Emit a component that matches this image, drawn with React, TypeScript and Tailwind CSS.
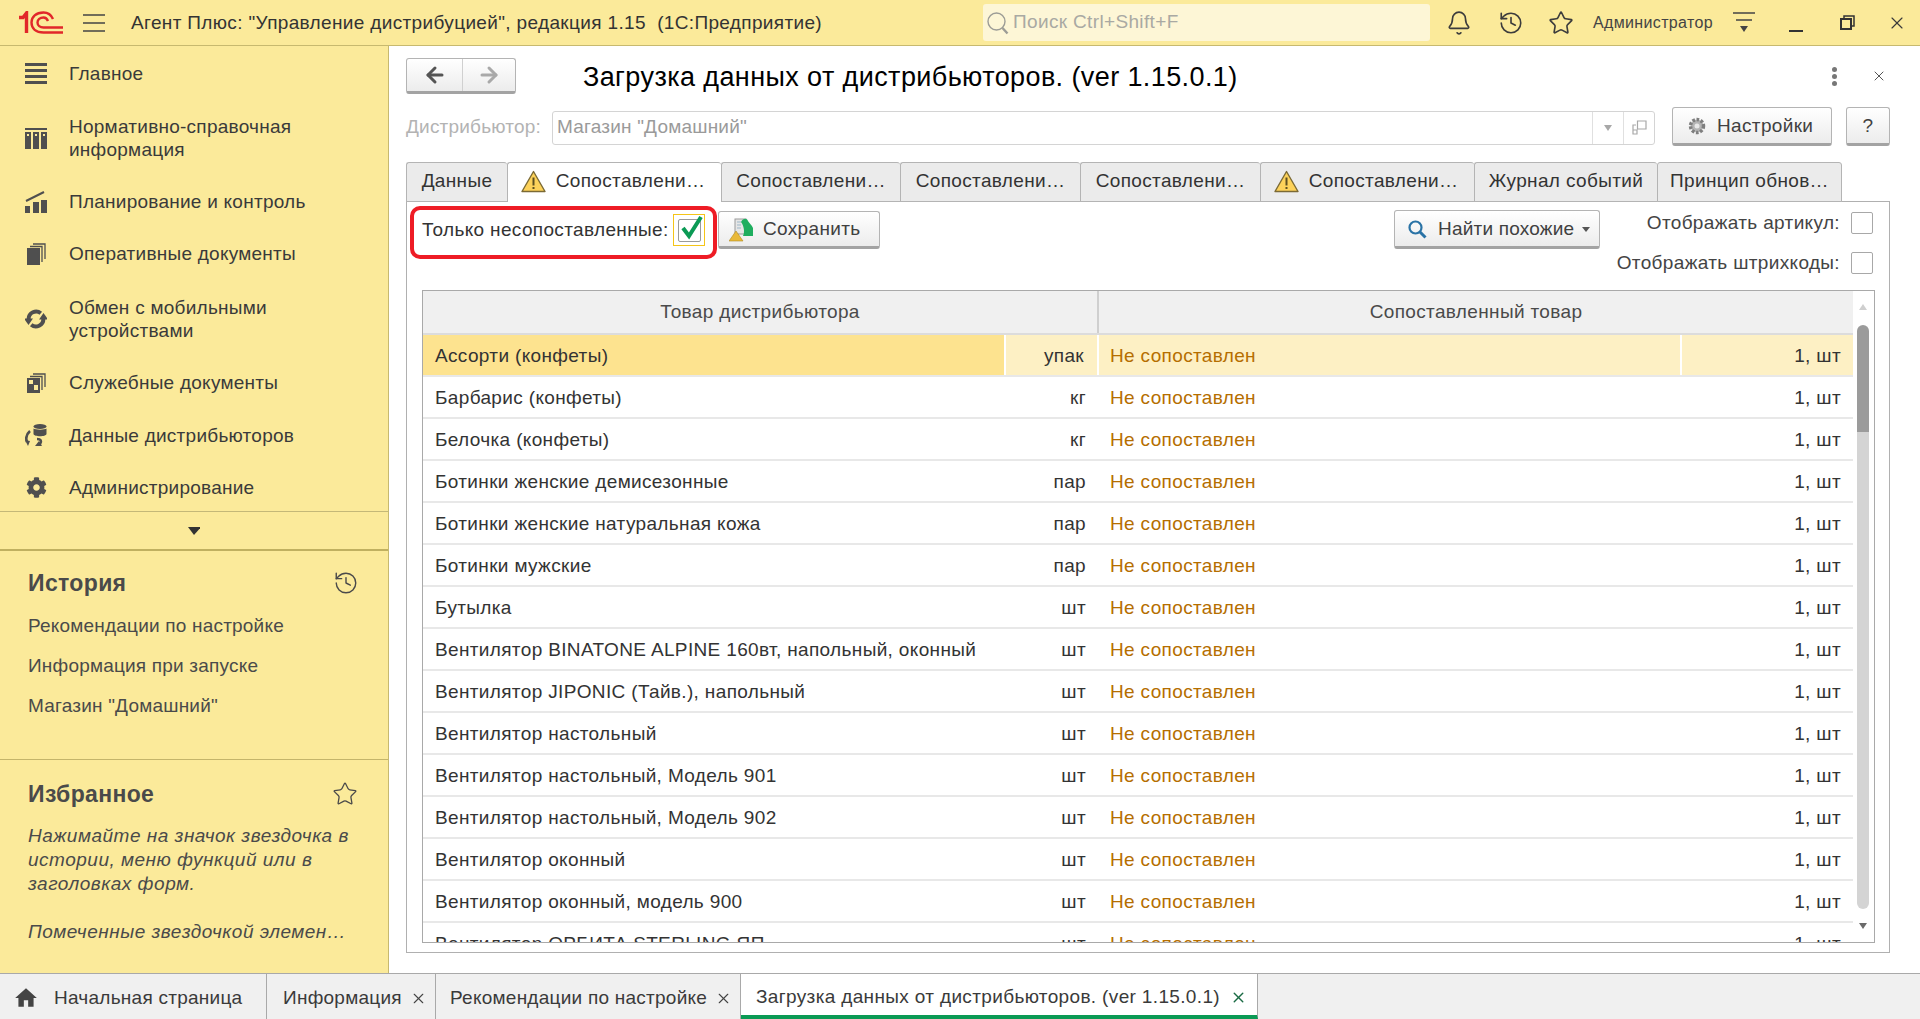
import React from "react";
import { Bell, History, Star, X, ArrowLeft, ArrowRight } from "lucide-react";
import { FaCog } from "react-icons/fa";
import { MdHome } from "react-icons/md";

const rows: [string, string][] = [
  ["Ассорти (конфеты)", "упак"],
  ["Барбарис (конфеты)", "кг"],
  ["Белочка (конфеты)", "кг"],
  ["Ботинки женские демисезонные", "пар"],
  ["Ботинки женские натуральная кожа", "пар"],
  ["Ботинки мужские", "пар"],
  ["Бутылка", "шт"],
  ["Вентилятор BINATONE ALPINE 160вт, напольный, оконный", "шт"],
  ["Вентилятор JIPONIC (Тайв.), напольный", "шт"],
  ["Вентилятор настольный", "шт"],
  ["Вентилятор настольный, Модель 901", "шт"],
  ["Вентилятор настольный, Модель 902", "шт"],
  ["Вентилятор оконный", "шт"],
  ["Вентилятор оконный, модель 900", "шт"],
  ["Вентилятор ОРБИТА STERLING ЯП", "шт"],
];

function Logo() {
  return (
    <svg width="44" height="23" viewBox="0 0 44 23" fill="none" stroke="#e1272a" strokeWidth="2.4">
      <path d="M0 6.5 L4 6.5 L7.5 2 L7.5 22" strokeWidth="3.4" />
      <path d="M34 8 C32 3.5 28.5 1.5 24.5 1.5 C17 1.5 12.5 6 12.5 11.5 C12.5 17.5 17 21.5 24.5 21.5 L44 21.5" />
      <path d="M29 10 C28 7.5 26.5 6.5 24.5 6.5 C21 6.5 18.5 8.8 18.5 11.5 C18.5 14.3 21 16.5 24.5 16.5 L44 16.5" />
    </svg>
  );
}

const navIcons: React.ReactNode[] = [
  <svg width="22" height="21" viewBox="0 0 22 21" fill="#4f4f4f"><rect y="0" width="22" height="3" /><rect y="6" width="22" height="3" /><rect y="12" width="22" height="3" /><rect y="18" width="22" height="3" /></svg>,
  <svg width="22" height="21" viewBox="0 0 22 21" fill="#4f4f4f"><rect y="0" width="22" height="2" /><rect y="4" width="6" height="17" /><rect x="8" y="4" width="6" height="17" /><rect x="16" y="4" width="6" height="17" /><rect x="2" y="6" width="2" height="2" fill="#fbea9a" /><rect x="10" y="6" width="2" height="2" fill="#fbea9a" /><rect x="18" y="6" width="2" height="2" fill="#fbea9a" /></svg>,
  <svg width="22" height="22" viewBox="0 0 22 22" fill="#4f4f4f"><rect x="0" y="15" width="5" height="7" /><rect x="8" y="11" width="6" height="11" /><rect x="16" y="9" width="6" height="13" /><path d="M1 10 L9 6 L19 1" stroke="#4f4f4f" strokeWidth="2" fill="none" /></svg>,
  <svg width="19" height="22" viewBox="0 0 19 22" fill="#4f4f4f"><rect x="0" y="5" width="13" height="17" /><path d="M3 3.5 H15 V19" fill="none" stroke="#4f4f4f" strokeWidth="1.3" /><path d="M6 1 H18 V16" fill="none" stroke="#4f4f4f" strokeWidth="1.3" /></svg>,
  <svg width="22" height="22" viewBox="0 0 22 22" fill="none" stroke="#4f4f4f" strokeWidth="4"><path d="M15.8 5.2 A7.5 7.5 0 0 0 3.6 11" /><path d="M6.2 16.8 A7.5 7.5 0 0 0 18.4 11" /><path d="M-1 10.5 L8 10.5 L3.5 17 Z" fill="#4f4f4f" stroke="none" /><path d="M14 11.5 L23 11.5 L18.5 5 Z" fill="#4f4f4f" stroke="none" /></svg>,
  <svg width="19" height="20" viewBox="0 0 19 20" fill="#4f4f4f"><rect x="0" y="5" width="13" height="15" /><rect x="2" y="7" width="4" height="4" fill="#fbea9a" /><rect x="7" y="12" width="4" height="5" fill="#fbea9a" /><path d="M3 3.5 H15 V17" fill="none" stroke="#4f4f4f" strokeWidth="1.3" /><path d="M6 1 H18 V14" fill="none" stroke="#4f4f4f" strokeWidth="1.3" /></svg>,
  <svg width="22" height="22" viewBox="0 0 22 22" fill="#4f4f4f"><ellipse cx="15" cy="2.5" rx="6.5" ry="2.5" /><path d="M8.5 4.5 C10 6 20 6 21.5 4.5 V10 C21 13 9 13 8.5 10 Z" /><path d="M5 7 C1.5 10 0.5 14 2 18" fill="none" stroke="#4f4f4f" strokeWidth="2.6" /><path d="M12 15 C16 15 17 17 15 20" fill="none" stroke="#4f4f4f" strokeWidth="2.6" /><path d="M0 16 L5 17 L3 22 Z" /><path d="M10 22 L17 22 L14 17 Z" /></svg>,
  <FaCog size={21} color="#4f4f4f" />,
];

const navItems: [string[], string][] = [
  [["Главное"], "h-[54px]"],
  [["Нормативно-справочная", "информация"], "h-[76px]"],
  [["Планирование и контроль"], "h-[51px]"],
  [["Оперативные документы"], "h-[53px]"],
  [["Обмен с мобильными", "устройствами"], "h-[77px]"],
  [["Служебные документы"], "h-[51px]"],
  [["Данные дистрибьюторов"], "h-[54px]"],
  [["Администрирование"], "h-[50px]"],
];

function Warn() {
  return (
    <svg width="25" height="23" viewBox="0 0 25 23">
      <path d="M12.5 1.5 L24 21.5 H1 Z" fill="#fdd25a" stroke="#7b6a35" strokeWidth="1.4" strokeLinejoin="round" />
      <rect x="11.5" y="7.5" width="2" height="8" fill="#5f5020" />
      <rect x="11.5" y="17" width="2" height="2" fill="#5f5020" />
    </svg>
  );
}

const tabs: [string, string, boolean, boolean][] = [
  ["Данные", "w-[101px]", false, false],
  ["Сопоставлени…", "w-[214px]", true, true],
  ["Сопоставлени…", "w-[179px]", false, false],
  ["Сопоставлени…", "w-[180px]", false, false],
  ["Сопоставлени…", "w-[180px]", false, false],
  ["Сопоставлени…", "w-[214px]", false, true],
  ["Журнал событий", "w-[183px]", false, false],
  ["Принцип обнов…", "w-[185px]", false, false],
];

const btn =
  "flex items-center rounded-[3px] border border-[#b4b4b4] border-b-[3px] border-b-[#a3a3a3] bg-linear-to-b from-white to-[#ececec] text-[#404040]";

export default function App() {
  return (
    <div className="flex h-[1019px] w-[1920px] flex-col overflow-hidden bg-white font-['Liberation_Sans',sans-serif] text-[19px] tracking-[0.35px] text-[#333]">
      {/* top bar */}
      <header className="flex h-[46px] shrink-0 items-center border-b border-[#c7b96f] bg-[#fbea9a]">
        <div className="ml-[19px]"><Logo /></div>
        <svg className="ml-[20px]" width="22" height="18" viewBox="0 0 22 18" stroke="#444" strokeWidth="1.3"><path d="M0 1 H22 M0 9 H22 M0 17 H22" /></svg>
        <div className="ml-[26px] w-[852px] whitespace-pre pt-[2px]">Агент Плюс: "Управление дистрибуцией", редакция 1.15  (1С:Предприятие)</div>
        <div className="flex h-[37px] w-[447px] items-center rounded-[3px] bg-[#fdf6d6] pl-[3px] text-[#a9a9a3]">
          <svg width="24" height="24" viewBox="0 0 24 24" fill="none" stroke="#9c9c96" strokeWidth="1.4"><circle cx="10.5" cy="10.5" r="8.5" /><path d="M16.5 17 L21.5 22.5" strokeWidth="2.4" /></svg>
          <span className="ml-[3px]">Поиск Ctrl+Shift+F</span>
        </div>
        <div className="ml-[3px] flex w-[52px] justify-center">
          <Bell size={26} strokeWidth={1.5} color="#3c3c3c" />
        </div>
        <div className="flex w-[52px] justify-center"><History size={26} strokeWidth={1.5} color="#3c3c3c" /></div>
        <div className="flex w-[48px] justify-center"><Star size={26} strokeWidth={1.5} color="#3c3c3c" /></div>
        <div className="ml-[8px] w-[120px] whitespace-nowrap text-[16px] text-[#444]">Администратор</div>
        <div className="flex w-[62px] justify-center">
          <svg width="22" height="21" viewBox="0 0 22 21"><path d="M0 1 H22 M3 8 H19" stroke="#444" strokeWidth="1.4" /><path d="M7 14 H15 L11 20 Z" fill="#444" /></svg>
        </div>
        <div className="flex w-[42px] justify-center pt-[16px]"><div className="h-[2px] w-[14px] bg-[#333]" /></div>
        <div className="flex w-[60px] justify-center">
          <svg width="15" height="15" viewBox="0 0 15 15" fill="none" stroke="#333" strokeWidth="2"><rect x="1" y="4" width="10" height="10" /><path d="M4 4 V1 H14 V11 H11" strokeWidth="1.5" /></svg>
        </div>
        <div className="flex w-[40px] justify-center"><X size={20} strokeWidth={1.4} color="#3a3a3a" /></div>
      </header>

      <div className="flex min-h-0 flex-1">
        {/* sidebar */}
        <aside className="flex w-[389px] shrink-0 flex-col border-r border-[#c7b96f] bg-[#fbea9a] text-[#3a3a3a]">
          <nav className="flex h-[466px] shrink-0 flex-col border-b border-[#c4b878]">
            {navItems.map(([lines, h], i) => (
              <div key={i} className={`flex ${h} shrink-0 items-center`}>
                <div className="flex w-[69px] shrink-0 justify-center pl-[3px]">{navIcons[i]}</div>
                <div className="leading-[23px] tracking-[0.25px]">
                  {lines.map((l) => <div key={l}>{l}</div>)}
                </div>
              </div>
            ))}
          </nav>
          <div className="flex h-[39px] shrink-0 items-center justify-center border-b-2 border-[#c0b060]">
            <svg width="12" height="8" viewBox="0 0 12 8"><path d="M0 0 H13 L6 8 Z" fill="#333" /></svg>
          </div>
          <section className="h-[209px] shrink-0 border-b border-[#c4b56a] pl-[28px] text-[#4a4a4a]">
            <div className="mt-[18px] flex h-[28px] items-center justify-between pr-[29px]">
              <span className="text-[23px] font-bold">История</span>
              <History size={26} strokeWidth={1.3} color="#4a4a4a" />
            </div>
            <div className="mt-[9px] flex h-[40px] items-center tracking-[0.2px]">Рекомендации по настройке</div>
            <div className="flex h-[40px] items-center tracking-[0.2px]">Информация при запуске</div>
            <div className="flex h-[40px] items-center tracking-[0.2px]">Магазин "Домашний"</div>
          </section>
          <section className="flex-1 pl-[28px] text-[#4a4a4a]">
            <div className="mt-[20px] flex h-[28px] items-center justify-between pr-[30px]">
              <span className="text-[23px] font-bold">Избранное</span>
              <Star size={26} strokeWidth={1.2} color="#4a4a4a" />
            </div>
            <div className="mt-[16px] italic leading-[24px] tracking-[0.5px]">
              <div>Нажимайте на значок звездочка в</div>
              <div>истории, меню функций или в</div>
              <div>заголовках форм.</div>
              <div className="mt-[24px]">Помеченные звездочкой элемен…</div>
            </div>
          </section>
        </aside>

        {/* main */}
        <main className="flex min-w-0 flex-1 flex-col pl-[17px] pr-[30px]">
          <div className="mt-[12px] flex h-[36px] shrink-0 items-center">
            <div className={`${btn} h-[36px] w-[110px] border-b-2`}>
              <div className="flex h-full w-[56px] items-center justify-center border-r border-[#d0d0d0]"><ArrowLeft size={24} strokeWidth={3} color="#555" /></div>
              <div className="flex h-full flex-1 items-center justify-center"><ArrowRight size={24} strokeWidth={3} color="#a9a9a9" /></div>
            </div>
            <h1 className="ml-[67px] flex-1 whitespace-nowrap pt-[2px] text-[27px] font-normal tracking-[0.4px] text-black">Загрузка данных от дистрибьюторов. (ver 1.15.0.1)</h1>
            <div className="flex w-[22px] flex-col items-center gap-[2px]">
              <span className="size-[5px] rounded-full bg-[#777]" /><span className="size-[5px] rounded-full bg-[#777]" /><span className="size-[5px] rounded-full bg-[#777]" />
            </div>
            <div className="ml-[23px] flex w-[22px] justify-center"><X size={16} strokeWidth={1.5} color="#555" /></div>
          </div>

          <div className="mt-[13px] flex h-[39px] shrink-0 items-center">
            <div className="mt-[2px] w-[146px] whitespace-nowrap tracking-[0.2px] text-[#b3b3b3]">Дистрибьютор:</div>
            <div className="mt-[2px] flex h-[34px] flex-1 items-center rounded-[3px] border border-[#d4d4d4] pl-[4px] tracking-[0.2px] text-[#9a9a9a]">
              <span className="flex-1">Магазин "Домашний"</span>
              <div className="flex h-full w-[31px] items-center justify-center border-l border-[#e0e0e0]">
                <svg width="8" height="6" viewBox="0 0 8 6"><path d="M0 0 H8 L4 6 Z" fill="#a8a8a8" /></svg>
              </div>
              <div className="flex h-full w-[31px] items-center justify-center border-l border-[#e0e0e0]">
                <svg width="15" height="15" viewBox="0 0 15 15" fill="none" stroke="#a8a8a8" strokeWidth="1.2"><path d="M5 10 H1 V14 H5 Z M1 10 V5 H4 M5.5 1 H14 V9 H5.5 Z" /></svg>
              </div>
            </div>
            <div className={`${btn} ml-[17px] h-[39px] w-[160px] pt-px`}>
              <svg className="ml-[14px]" width="20" height="20" viewBox="0 0 20 20"><circle cx="10" cy="10" r="6.5" fill="#b4b4b4" stroke="#7e7e7e" strokeWidth="3.5" strokeDasharray="2.6 1.6" /><circle cx="10" cy="10" r="2.5" fill="#e8e8e8" /></svg>
              <span className="ml-[10px]">Настройки</span>
            </div>
            <div className={`${btn} ml-[14px] h-[39px] w-[44px] justify-center pt-px text-[#222]`}>?</div>
          </div>

          <div className="relative z-10 mt-[16px] flex h-[40px] shrink-0">
            {tabs.map(([t, w, active, warn], i) => (
              <div key={i} className={`flex ${w} shrink-0 items-center justify-center rounded-t-[3px] border-l border-t border-[#b4b4b4] pb-[2px] ${warn ? "pr-[3px]" : ""} ${i === tabs.length - 1 ? "border-r" : ""} ${active ? "bg-white" : "border-b bg-[#ebebeb]"}`}>
                {warn && <span className="mr-[10px]"><Warn /></span>}
                <span className="whitespace-nowrap">{t}</span>
              </div>
            ))}
          </div>

          <div className="-mt-px mb-[20px] flex min-h-0 flex-1 flex-col border border-[#b0b0b0]">
            <div className="flex h-[88px] shrink-0 items-start pl-[15px] pr-[16px] pt-[9px]">
              <div className="relative flex h-[38px] items-center">
                <div className="pointer-events-none absolute bottom-[-10px] left-[-12px] right-[-12px] top-[-5px] rounded-[10px] border-4 border-[#ee1c25]" />
                <span className="w-[251px] whitespace-nowrap">Только несопоставленные:</span>
                <div className="flex size-[32px] items-center justify-center border border-[#f5c518]">
                  <div className="relative size-[23px] rounded-[2px] border border-[#9a9a9a]">
                    <svg className="absolute -top-[6px] left-[1px]" width="24" height="26" viewBox="0 0 24 26" fill="none" stroke="#0b9a55" strokeWidth="4"><path d="M3 14 L9 22 L21 3" /></svg>
                  </div>
                </div>
              </div>
              <div className={`${btn} ml-[13px] h-[38px] w-[162px] pt-px`}>
                <svg className="ml-[10px]" width="24" height="24" viewBox="0 0 24 24">
                  <rect x="6" y="1" width="11" height="15" fill="#e6e6e6" stroke="#9a9a9a" />
                  <path d="M8 4 H12 M8 7 H12 M8 10 H12" stroke="#9db7c9" />
                  <path d="M12 4 C14 0 18 0 19 3 C20 5 23 7 24 10 V18 H14 C16 14 15 8 12 4 Z" fill="#1fae5f" />
                  <path d="M7 13 L14 23 H0 Z" fill="#e9b93a" stroke="#b08a20" strokeWidth="0.6" />
                </svg>
                <span className="ml-[10px]">Сохранить</span>
              </div>
              <div className={`${btn} -mt-px ml-auto h-[39px] w-[206px] pt-px`}>
                <svg className="ml-[12px]" width="20" height="20" viewBox="0 0 20 20" fill="none" stroke="#2a73a6" strokeWidth="2.2"><circle cx="8.5" cy="8.5" r="6" /><path d="M13 13 L18.5 18.5" strokeWidth="3" /></svg>
                <span className="ml-[11px] whitespace-nowrap tracking-[0.2px]">Найти похожие</span>
                <svg className="ml-[8px]" width="8" height="5" viewBox="0 0 8 5"><path d="M0 0 H8 L4 5 Z" fill="#555" /></svg>
              </div>
              <div className="flex w-[273px] shrink-0 flex-col items-end gap-[18px] pt-px text-[#444]">
                <div className="flex h-[22px] items-center">
                  <span className="whitespace-nowrap">Отображать артикул:</span>
                  <div className="ml-[11px] size-[22px] rounded-[2px] border border-[#a8a8a8]" />
                </div>
                <div className="flex h-[22px] items-center">
                  <span className="whitespace-nowrap">Отображать штрихкоды:</span>
                  <div className="ml-[11px] size-[22px] rounded-[2px] border border-[#a8a8a8]" />
                </div>
              </div>
            </div>

            <div className="mb-[9px] ml-[15px] mr-[14px] flex min-h-0 flex-1 overflow-hidden border border-[#a9a9a9]">
              <div className="w-[1430px] shrink-0">
                <div className="grid h-[44px] grid-cols-[676px_754px] border-b-2 border-[#dcdcdc] bg-[#f0f0f0] text-[#4a4a4a]">
                  <div className="flex items-center justify-center border-r-2 border-[#cfcfcf]">Товар дистрибьютора</div>
                  <div className="flex items-center justify-center">Сопоставленный товар</div>
                </div>
                {rows.map(([name, unit], i) => (
                  <div key={i} className={`grid h-[42px] grid-cols-[583px_93px_581px_173px] border-b-2 border-[#e8e8e8] pt-[2px] ${i === 0 ? "bg-[#fdf0c4]" : ""}`}>
                    <div className={`flex items-center whitespace-nowrap pl-[12px] ${i === 0 ? "-mt-[2px] border-r-2 border-white bg-[#fde38f] pt-[2px]" : ""}`}>{name}</div>
                    <div className={`flex items-center justify-end pr-[13px] ${i === 0 ? "-mt-[2px] border-r-2 border-white pt-[2px]" : ""}`}>{unit}</div>
                    <div className="flex items-center pl-[11px] text-[#b56e00]">Не сопоставлен</div>
                    <div className={`flex items-center justify-end pr-[12px] ${i === 0 ? "-mt-[2px] border-l-2 border-white pt-[2px]" : ""}`}>1, шт</div>
                  </div>
                ))}
              </div>
              <div className="flex w-[21px] shrink-0 flex-col items-center pr-[1px] pt-[13px]">
                <svg width="8" height="6" viewBox="0 0 8 6"><path d="M4 0 L8 6 H0 Z" fill="#cfcfcf" /></svg>
                <div className="mt-[15px] flex h-[584px] w-[12px] shrink-0 flex-col overflow-hidden rounded-full">
                  <div className="h-[107px] bg-[#9b9b9b]" />
                  <div className="flex-1 bg-[#d4d4d4]" />
                </div>
                <svg className="mt-[14px]" width="8" height="6" viewBox="0 0 8 6"><path d="M0 0 H8 L4 6 Z" fill="#6a6a6a" /></svg>
              </div>
            </div>
          </div>
        </main>
      </div>

      {/* bottom tabs */}
      <footer className="flex h-[46px] shrink-0 border-t border-[#a9a9a9] bg-[#f0f0f0] tracking-[0.25px] text-[#3a3a3a]">
        <div className="flex w-[267px] items-center border-r border-[#a9a9a9] pl-[13px] pt-[3px]">
          <MdHome size={26} color="#444" />
          <span className="ml-[15px] whitespace-nowrap">Начальная страница</span>
        </div>
        <div className="flex w-[169px] items-center border-r border-[#a9a9a9] pl-[16px] pt-[3px]">
          <span className="whitespace-nowrap">Информация</span>
          <X className="ml-[8px]" size={17} strokeWidth={1.6} color="#444" />
        </div>
        <div className="flex w-[305px] items-center border-r border-[#a9a9a9] pl-[14px] pt-[3px]">
          <span className="whitespace-nowrap">Рекомендации по настройке</span>
          <X className="ml-[8px]" size={17} strokeWidth={1.6} color="#444" />
        </div>
        <div className="flex w-[517px] items-center border-r border-b-4 border-r-[#a9a9a9] border-b-[#0b9a55] bg-white pl-[15px] pt-[5px]">
          <span className="whitespace-nowrap tracking-[0.35px]">Загрузка данных от дистрибьюторов. (ver 1.15.0.1)</span>
          <X className="ml-[10px]" size={17} strokeWidth={2} color="#1a6b44" />
        </div>
      </footer>
    </div>
  );
}
